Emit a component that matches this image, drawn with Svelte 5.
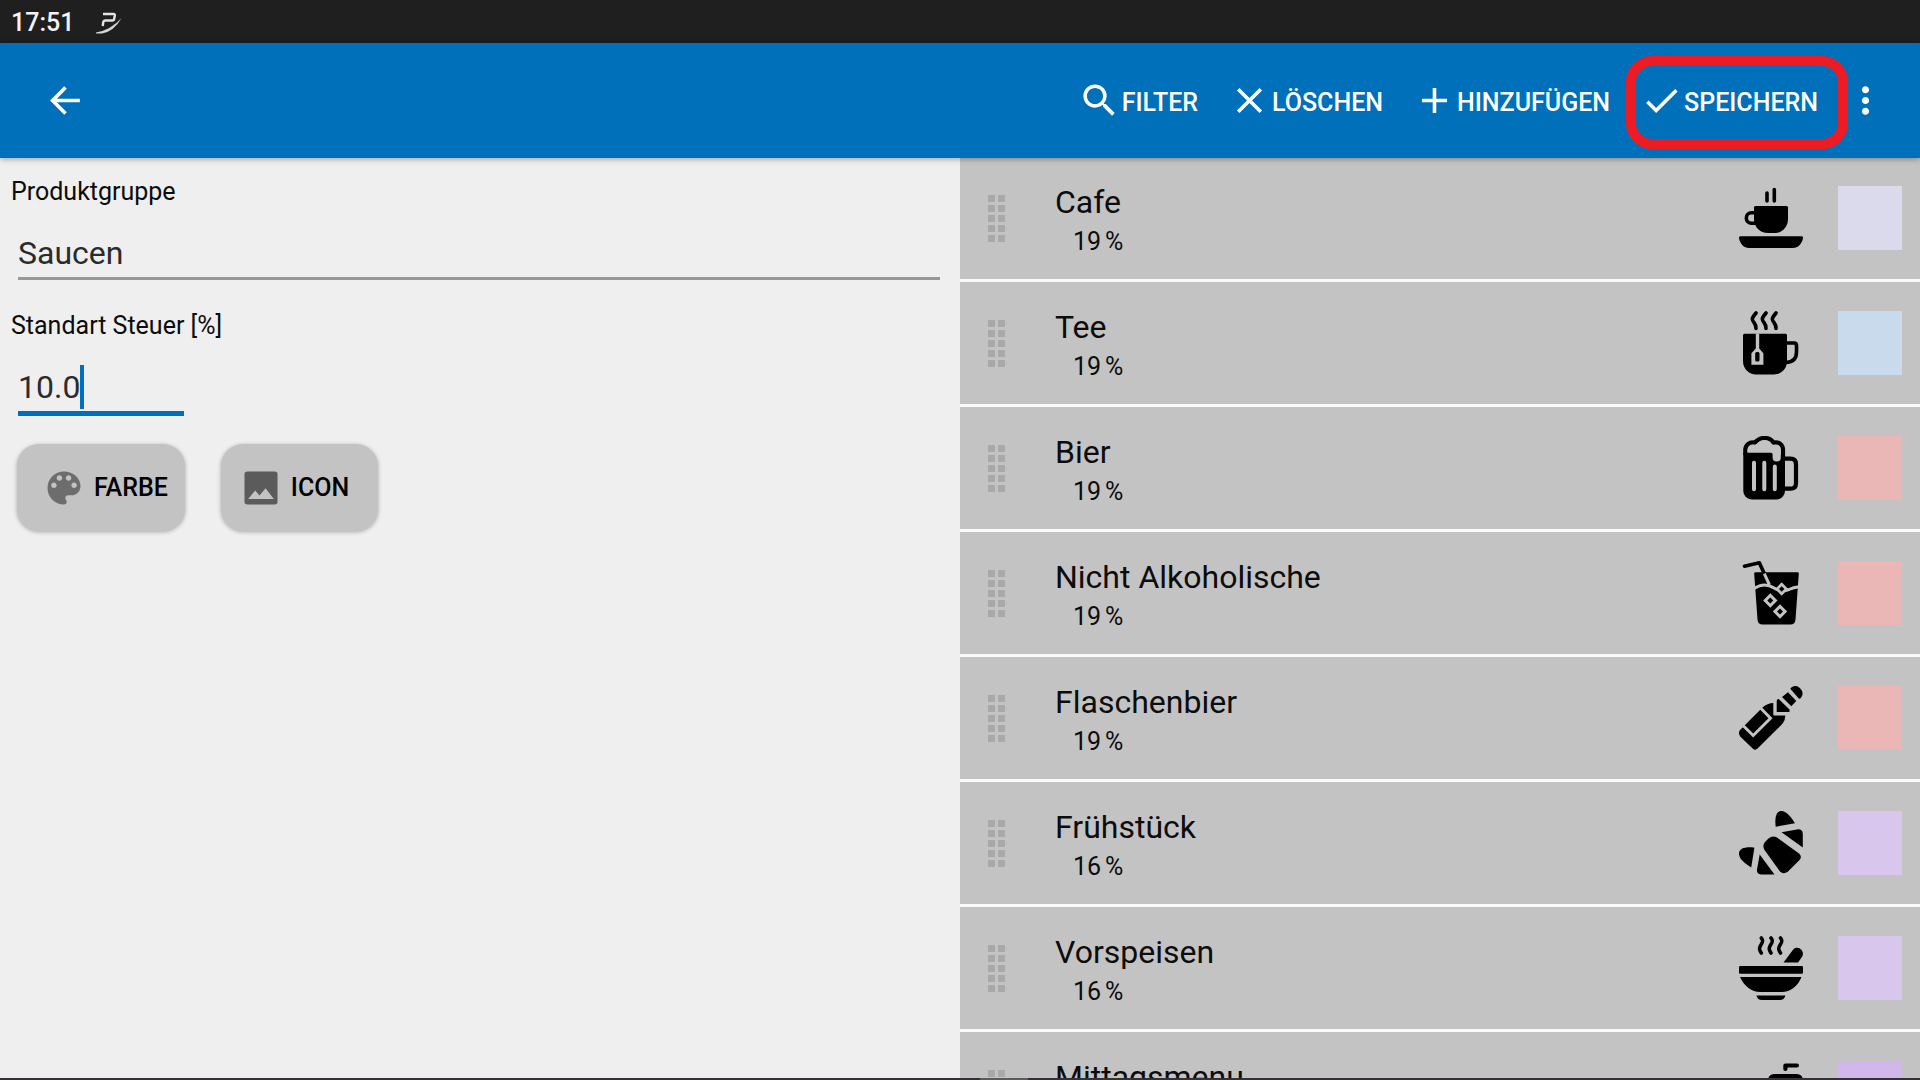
<script>
  let group = $state('Saucen');
  let tax = $state('10.0');

  const groups = [
    { name: 'Cafe', tax: 19, icon: 'coffee', color: '#dadaec' },
    { name: 'Tee', tax: 19, icon: 'tea', color: '#c9daec' },
    { name: 'Bier', tax: 19, icon: 'beer', color: '#ebb6b6' },
    { name: 'Nicht Alkoholische', tax: 19, icon: 'drink', color: '#ebb6b6' },
    { name: 'Flaschenbier', tax: 19, icon: 'bottle', color: '#ebb6b6' },
    { name: 'Frühstück', tax: 16, icon: 'croissant', color: '#d8c6ec' },
    { name: 'Vorspeisen', tax: 16, icon: 'soup', color: '#d8c6ec' },
    { name: 'Mittagsmenu', tax: 16, icon: 'dish', color: '#d1b7eb' }
  ];
</script>

{#snippet icon(name)}
  <svg class="food" viewBox="0 0 64 64" aria-hidden="true">
    {#if name === 'coffee'}
      <path d="M16.500 20h31a1.500 1.500 0 0 1 1.500 1.500V33c0 8-6 14-13 14h-7c-8 0-14-6-14-14V21.500a1.500 1.500 0 0 1 1.500-1.500z" />
      <path class="line" d="M16 26.800h-3.500a5.200 5.200 0 0 0 0 10.400H17M28 7v8M35.300 3.500V15" />
      <path d="M1.500 50.300h61a1.500 1.500 0 0 1 1.500 1.700c-1 6-5 10-10 10H10C5 62 1 58 0 52a1.500 1.500 0 0 1 1.500-1.700z" />
    {:else if name === 'tea'}
      <path d="M5.500 22.700h41a1.500 1.500 0 0 1 1.500 1.500V50c0 8-6 13.500-13 13.500H17C10 63.500 4 58 4 50V24.200a1.500 1.500 0 0 1 1.500-1.500z" />
      <path class="line" d="M47 32h8q2.500 0 2.500 2.500V41q0 10-10.500 10.500M17 2c-4.500 5.500-4.500 6.500-2 9.500q2 2.500 2 6M27 2c-4.500 5.500-4.500 6.500-2 9.500q2 2.500 2 6M37 2c-4.500 5.500-4.500 6.500-2 9.500q2 2.500 2 6" />
      <path class="gap" d="M16.800 22.500h3.400V37.500l4.200 4.700v11.500H12.400V42.200l4.400-4.700z" />
      <rect x="16.200" y="41" width="4.300" height="9.500" rx="1.500" />
    {:else if name === 'beer'}
      <path d="M4.300 16.500V55a8.500 8.500 0 0 0 8.500 8.500h24.500A8.500 8.500 0 0 0 46 55V20L34 16.500z" />
      <path class="line wide" d="M6.300 18v-4c0-5 4-8.500 9.500-7.300C18 4 21 2 25.500 2s7.500 2 9 4.700C40 5.500 44 8.500 44 14v9" />
      <path class="gap" d="M8.600 16.400v-3q1-5.400 7.700-4.600l2-.300Q21 4.200 25.500 4.200T32.500 8.400l2 .5q7.300-.7 7.300 5.600v7a4.100 4.100 0 0 1-8.200 0v-3q0-2.100-2.100-2.100z" />
      <path class="cut" d="M15 26.700v26.600M25.300 26.700v26.600M35.800 30.500v22.800" />
      <path class="line wide" d="M46 22.700h5.500q5.500 0 5.500 5.500v19q0 5.500-5.500 5.500H46" />
    {:else if name === 'drink'}
      <path d="M16.500 11.300h42a1.300 1.300 0 0 1 1.300 1.400L56.500 58.500q-.4 5-5 5H23.500q-4.600 0-5-5L15.200 12.700a1.300 1.300 0 0 1 1.300-1.400z" />
      <path class="line" d="M5.500 5.200l14.800-3.400L25 12" />
      <path class="cut thin" d="M25.300 12.700l5 11M15 27.500c7-4.500 14-4.500 20-.5 5 3.300 9.500 3.500 15 1.500q4.500-2 10-2.700" />
      <path class="gap" d="M42.700 21.300l6.500 6.700-6.500 6.700-6.500-6.700zM31.300 32.300l7.200 7.200-7.200 7.200-7.200-7.200zM41 43.300l7.200 7.200-7.200 7.200-7.200-7.200z" />
      <path d="M42.700 25.200l2.700 2.800-2.700 2.800-2.700-2.800zM31.300 36.500l3 3-3 3-3-3zM41 47.500l3 3-3 3-3-3z" />
    {:else if name === 'bottle'}
      <path d="M51.300 2.800C54-.8 58-.8 60.800 2s4.300 6.500.5 10.500l-1.300.2zM49 6.300L57.300 15 52.300 20.300 43 11zM37.700 15q0-2 2-2L50.500 23.500V26H37.700z" />
      <path d="M34.300 17v11.500q0 1 1 1h11q0 5-2.600 8L18.500 62.500q-2 2-4.300.5L1.200 50.500Q-1 47 .8 44.300L23.500 21.500q5-4.500 10.800-4.500z" />
      <path class="cut thin" d="M22 22.500l9.500 9.800L14.200 49.500 4 39.500" />
    {:else if name === 'croissant'}
      <path d="M36.700 15.700Q34.800 0 42.500 0C47 0 51.500 5 56 12.300zM42.500 21.200L58 18.400q5.800-.5 5.800 4.600v13.500zM15.400 36.700L12.200 56.500C4 51 0 47.500 0 42.500c0-5 6.500-7 15.400-5.800zM20.700 43.500l14.800 20H22q-4.500-.5-4-5z" />
      <path d="M26 31l3.500-3.500q4-3.500 8.500-1l22 16q3.500 3 .5 6.500L49 60.500q-4.500 3.500-8 0L25.500 39q-2.500-4.500.5-8z" />
    {:else if name === 'soup'}
      <rect y="30" width="64" height="7.700" rx="1.300" />
      <path d="M1 41h61.500C59 50 51 56 43 56H21C13 56 5 50 1 41zM17.300 59.500h29.200q-1.500 4.500-5.500 4.500H22.800q-4 0-5.500-4.500zM44.500 26.600L54.200 13.500c2-2.500 6-2.500 8.200.2 2 2.400 2 5.300.2 7.700L59 26.600z" />
      <path class="line" d="M22.300 2c4.500 5-3.500 7-1.500 12q.5 1.500 1.500 3M32 2c4.500 5-3.500 7-1.500 12q.5 1.500 1.500 3M41.500 2c4.500 5-3.500 7-1.500 12q.5 1.500 1.500 3" />
    {:else}
      <path class="line wide" d="M46.400 8V4.500h11.500" />
      <path d="M29 28v-8q0-7 7-7h21q7 0 7 7v8zM0 32h64v8H0z" />
    {/if}
  </svg>
{/snippet}

<div class="page">
  <div class="status">
    <time>17:51</time>
    <svg class="logo" viewBox="0 0 26 22" aria-hidden="true">
      <path d="M7 2h10.500q1.500 0 1.300 1.500l-.6 3.300Q18 8.500 16.200 8.500H9q-1.500 0-1.700 1.500L6.700 14" fill="none" stroke="#e4e4e4" stroke-width="2.400" />
      <path d="M0 20.500Q15 18 25.500 6 18 19.500 6 21.500H0z" fill="#d6d6d6" />
    </svg>
  </div>

  <header>
    <button class="tool" aria-label="Zurück">
      <svg viewBox="0 0 24 24"><path class="stroke" d="M20 12H5M12 4.700L4.800 12l7.200 7.300" /></svg>
    </button>
    <nav>
      <button class="tool">
        <svg viewBox="0 0 24 24"><path d="M15.500 14h-.79l-.28-.27A6.471 6.471 0 0 0 16 9.500 6.500 6.500 0 1 0 9.500 16c1.610 0 3.090-.59 4.230-1.570l.27.28v.79l5 4.990L20.490 19l-4.990-5zm-6 0C7.010 14 5 11.990 5 9.500S7.010 5 9.500 5 14 7.010 14 9.500 11.990 14 9.500 14z" /></svg>
        <span>FILTER</span>
      </button>
      <button class="tool">
        <svg viewBox="0 0 24 24"><path d="M19 6.410L17.590 5 12 10.590 6.410 5 5 6.410 10.590 12 5 17.590 6.410 19 12 13.410 17.590 19 19 17.590 13.410 12z" /></svg>
        <span>LÖSCHEN</span>
      </button>
      <button class="tool">
        <svg viewBox="0 0 24 24"><path d="M19 13h-6v6h-2v-6H5v-2h6V5h2v6h6v2z" /></svg>
        <span>HINZUFÜGEN</span>
      </button>
      <button class="tool marked">
        <svg viewBox="0 0 24 24"><path d="M9 16.170L4.830 12l-1.420 1.410L9 19 21 7l-1.410-1.410z" /></svg>
        <span>SPEICHERN</span>
      </button>
      <button class="tool more" aria-label="Weitere Optionen">
        <svg viewBox="0 0 24 24"><path d="M12 8c1.100 0 2-.9 2-2s-.9-2-2-2-2 .9-2 2 .9 2 2 2zm0 2c-1.100 0-2 .9-2 2s.9 2 2 2 2-.9 2-2-.9-2-2-2zm0 6c-1.100 0-2 .9-2 2s.9 2 2 2 2-.9 2-2-.9-2-2-2z" /></svg>
      </button>
    </nav>
  </header>

  <main>
    <form onsubmit={(e) => e.preventDefault()}>
      <label for="group">Produktgruppe</label>
      <div class="field">
        <input id="group" type="text" bind:value={group} />
      </div>
      <label for="tax">Standart Steuer [%]</label>
      <div class="field active">
        <input id="tax" type="text" inputmode="decimal" bind:value={tax} />
        <span class="caret"></span>
      </div>
      <div class="actions">
        <button type="button" class="raised color">
          <svg viewBox="0 0 24 24" fill="#6d6d6d"><path d="M12 3c-4.970 0-9 4.030-9 9s4.030 9 9 9c.83 0 1.500-.67 1.500-1.500 0-.39-.15-.74-.39-1.010-.23-.26-.38-.61-.38-.99 0-.83.67-1.500 1.500-1.500H16c2.760 0 5-2.240 5-5 0-4.420-4.030-8-9-8zm-5.500 9c-.83 0-1.500-.67-1.500-1.500S5.670 9 6.500 9 8 9.670 8 10.500 7.330 12 6.500 12zm3-4C8.670 8 8 7.330 8 6.500S8.670 5 9.500 5s1.500.67 1.500 1.500S10.330 8 9.500 8zm5 0c-.83 0-1.500-.67-1.500-1.500S13.670 5 14.500 5s1.500.67 1.500 1.500S15.330 8 14.500 8zm3 4c-.83 0-1.500-.67-1.500-1.500S16.670 9 17.500 9s1.500.67 1.500 1.500-.67 1.500-1.500 1.500z" /></svg>
          FARBE
        </button>
        <button type="button" class="raised image">
          <svg viewBox="0 0 24 24" fill="#5b5b5b"><path d="M19.500 3h-15A1.500 1.500 0 0 0 3 4.500v15A1.500 1.500 0 0 0 4.500 21h15a1.500 1.500 0 0 0 1.500-1.500v-15A1.500 1.500 0 0 0 19.500 3zM5 18l3.800-4.600 2.400 2.700 3.300-4L19 18z" /></svg>
          ICON
        </button>
      </div>
    </form>

    <ul>
      {#each groups as item}
        <li>
          <span class="handle">
            {#each Array(10) as _}<i></i>{/each}
          </span>
          <div class="text">
            <span class="name">{item.name}</span>
            <span class="rate"><span>{item.tax}</span><span>%</span></span>
          </div>
          {@render icon(item.icon)}
          <span class="swatch" style:background={item.color}></span>
        </li>
      {/each}
    </ul>
  </main>
  <div class="edge"><span></span></div>
</div>

<style>
  :global(body) {
    margin: 0;
  }
  .page {
    --row: #c3c3c3;
    height: 100vh;
    display: flex;
    flex-direction: column;
    overflow: hidden;
    background: #efefef;
    color: #0c0c0c;
    font-family: Roboto, sans-serif;
    font-size: 25px;
  }
  button,
  input {
    font: inherit;
    color: inherit;
    border: 0;
    margin: 0;
    padding: 0;
    background: none;
  }
  .status {
    flex: none;
    box-sizing: border-box;
    height: 43px;
    display: flex;
    align-items: center;
    gap: 22px;
    padding: 2px 11px 0;
    background: #1f1f1f;
    color: #f4f4f4;
    font-weight: 500;
  }
  .logo {
    width: 26px;
    height: 22px;
  }
  header {
    position: relative;
    flex: none;
    height: 115px;
    display: flex;
    align-items: center;
    justify-content: space-between;
    padding: 0 33px 0 44px;
    background: #0070bb;
    color: #fff;
    box-shadow: 0 1px 6px rgba(0, 0, 0, 0.35);
    z-index: 1;
  }
  nav {
    display: flex;
    align-items: center;
    gap: 30px;
  }
  .tool {
    position: relative;
    display: flex;
    align-items: center;
    gap: 1px;
    font-weight: 500;
    white-space: nowrap;
  }
  .tool span {
    padding-top: 4px;
  }
  .tool svg {
    width: 43px;
    height: 43px;
    fill: currentColor;
  }
  .tool .stroke {
    fill: none;
    stroke: currentColor;
    stroke-width: 2;
  }
  .marked::after {
    content: '';
    position: absolute;
    inset: -23px -30px -27px -14px;
    border: 10px solid #ed1c24;
    border-radius: 26px;
  }
  .more {
    margin-left: -4px;
  }
  main {
    flex: 1;
    min-height: 0;
    margin-top: -1px;
    display: grid;
    grid-template-columns: 1fr 1fr;
  }
  form {
    display: flex;
    flex-direction: column;
    align-items: flex-start;
    padding: 17px 11px;
  }
  label {
    line-height: 36px;
  }
  .field {
    align-self: stretch;
    display: flex;
    align-items: flex-end;
    height: 65px;
    padding-bottom: 2px;
    margin: 0 9px 28px 7px;
    border-bottom: 3px solid #979797;
    color: #2b2b2b;
    font-size: 32px;
  }
  .field input {
    flex: 1;
    min-width: 0;
    height: 44px;
    outline: none;
    line-height: 44px;
  }
  .field.active {
    align-self: flex-start;
    width: 166px;
    border-bottom: 5px solid #0070bb;
  }
  .field.active input {
    flex: none;
    field-sizing: content;
  }
  .caret {
    width: 4px;
    height: 44px;
    background: #0070bb;
  }
  .actions {
    display: flex;
    gap: 36px;
    margin: 0 6px;
  }
  .raised {
    height: 87px;
    display: flex;
    align-items: center;
    gap: 8px;
    border-radius: 22px;
    background: var(--row);
    box-shadow: 0 1px 4px rgba(0, 0, 0, 0.3);
    color: #000;
    font-weight: 500;
  }
  .raised svg {
    width: 44px;
    height: 44px;
  }
  .color {
    padding: 0 17px 0 25px;
  }
  .image {
    padding: 0 29px 0 18px;
  }
  ul {
    margin: 0;
    padding: 0;
    list-style: none;
    overflow: hidden;
  }
  li {
    height: 122px;
    display: flex;
    align-items: center;
    padding: 0 18px 0 28px;
    border-bottom: 3px solid #fafafa;
    background: var(--row);
  }
  .handle {
    display: grid;
    grid-template-columns: 7px 7px;
    gap: 3px;
  }
  .handle i {
    height: 7px;
    background: #a9a9a9;
  }
  .text {
    flex: 1;
    display: flex;
    flex-direction: column;
    padding: 4px 0 0 50px;
  }
  .name {
    font-size: 32px;
    line-height: 44px;
  }
  .rate {
    display: flex;
    gap: 4px;
    padding-left: 18px;
    line-height: 36px;
  }
  .food {
    width: 64px;
    height: 64px;
    margin-right: 35px;
    fill: #000;
  }
  .food .line,
  .food .cut {
    fill: none;
    stroke: #000;
    stroke-width: 3.600;
    stroke-linecap: round;
    stroke-linejoin: round;
  }
  .food .wide {
    stroke-width: 4.200;
  }
  .food .cut {
    stroke: var(--row);
    stroke-width: 4;
  }
  .food .thin {
    stroke-width: 3;
    stroke-linejoin: miter;
    stroke-linecap: butt;
  }
  .food .gap {
    fill: var(--row);
  }
  .swatch {
    width: 64px;
    height: 64px;
  }
  .edge {
    flex: none;
    height: 2px;
    display: flex;
    justify-content: center;
    background: #333136;
  }
  .edge span {
    width: 48px;
    margin-left: 88px;
    background: #5c5c5c;
  }
</style>
